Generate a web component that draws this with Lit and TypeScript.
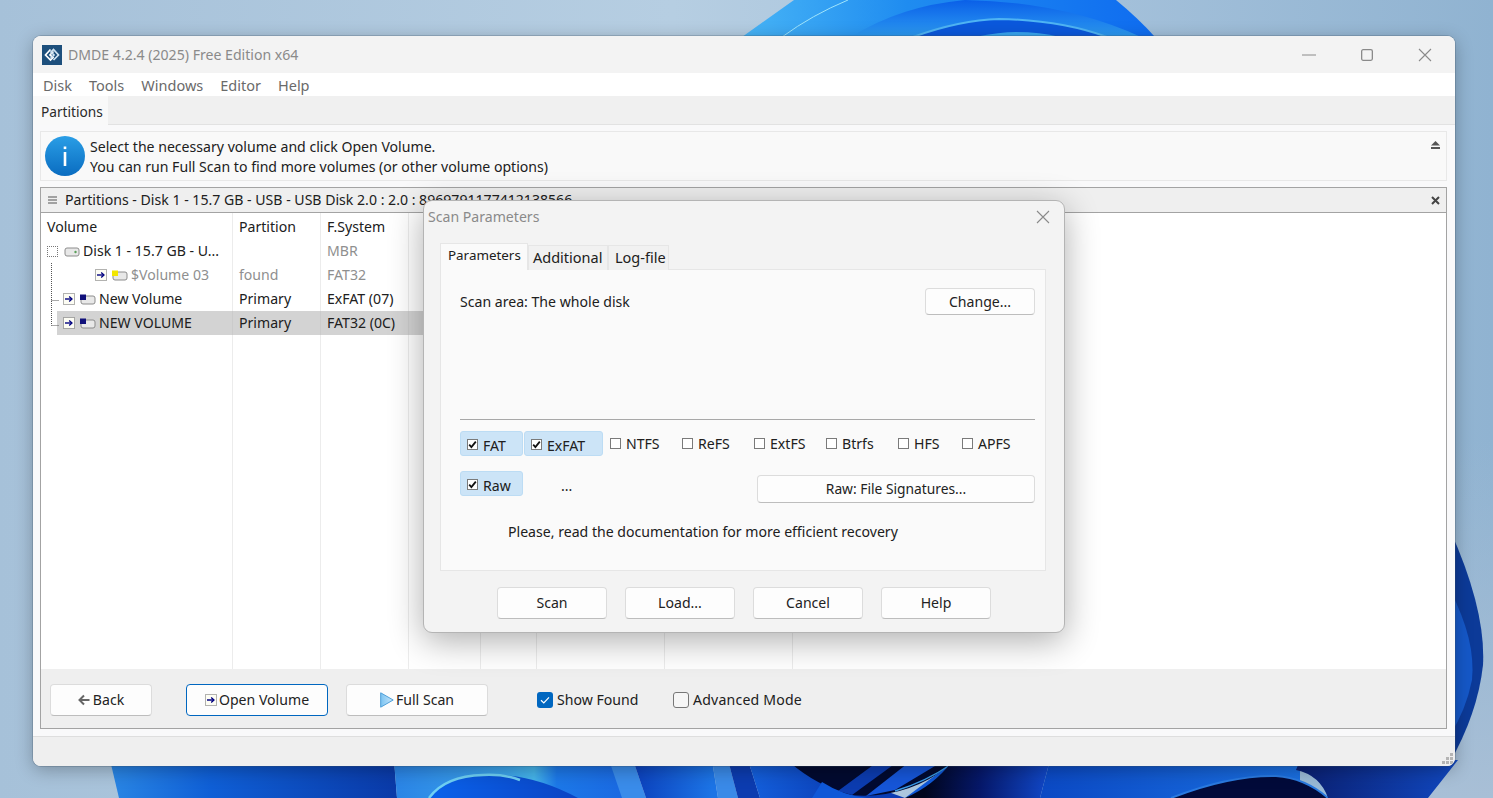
import { LitElement, html, css, svg } from "lit";
import { customElement } from "lit/decorators.js";

const check = svg`<path d="M2.2 5.6 L4.4 8 L8.8 2.6" fill="none" stroke="#111" stroke-width="1.8"/>`;

const smallBox = (on: boolean) => html`<svg class="cb" width="11" height="11" viewBox="0 0 11 11">
  <rect x=".5" y=".5" width="10" height="10" fill="#fff" stroke="#7a7a7a"/>${on ? check : ""}</svg>`;

const arrowBox = (cls = "abox") => html`<svg class=${cls} width="12" height="12" viewBox="0 0 12 12">
  <rect x=".5" y=".5" width="11" height="11" fill="#fdfdf4" stroke="#666" stroke-dasharray="1 1"/>
  <path d="M2 6 H8" stroke="#000080" stroke-width="1.4"/><path d="M6.2 3.4 L9 6 L6.2 8.6" fill="none" stroke="#000080" stroke-width="1.3"/></svg>`;

const driveIcon = (flag: string) => html`<svg class="drive" width="16" height="12" viewBox="0 0 16 12">
  <rect x="1" y="3" width="14" height="8" rx="2" fill="#e8e8e8" stroke="#8c8c8c"/>
  ${flag ? svg`<rect x="0" y="1.5" width="6" height="5.5" fill=${flag}/>` : svg`<circle cx="11.5" cy="7" r="1.2" fill="#5aa05a"/>`}
</svg>`;

const rows = [
  { indent: "l0", box: "dots", flag: "", name: "Disk 1 - 15.7 GB - U...", part: "", fs: "MBR", dim: false, fsDim: true },
  { indent: "l2", box: "arrow", flag: "#f2e600", name: "$Volume 03", part: "found", fs: "FAT32", dim: true, fsDim: true },
  { indent: "l1", box: "arrow", flag: "#10107a", name: "New Volume", part: "Primary", fs: "ExFAT (07)", dim: false, fsDim: false },
  { indent: "l1 sel", box: "arrow", flag: "#10107a", name: "NEW VOLUME", part: "Primary", fs: "FAT32 (0C)", dim: false, fsDim: false },
];

const fsItems = [
  { n: "NTFS", w: "" }, { n: "ReFS", w: "" }, { n: "ExtFS", w: "" },
  { n: "Btrfs", w: "" }, { n: "HFS", w: "short" }, { n: "APFS", w: "short" },
];

@customElement("app-root")
export class AppRoot extends LitElement {
  static styles = css`
    :host { display: block; position: relative; width: 1493px; height: 798px; overflow: hidden;
      font-family: "Noto Sans", "Open Sans", sans-serif; font-size: 14.1px; color: #202020; line-height: 20px; }
    .wall { position: absolute; inset: 0; display: block; }
    .win { position: absolute; left: 33px; top: 36px; width: 1422px; height: 730px; box-sizing: border-box;
      border-radius: 8px; overflow: hidden; background: #f9f9fa; display: flex; flex-direction: column;
      box-shadow: 0 0 0 1px rgba(60,80,100,.25), 0 4px 18px rgba(0,0,0,.28); }
    .title { height: 37px; flex: none; background: #f3f3f3; display: flex; align-items: center; padding-left: 9px; color: #8a8a8a; }
    .logo { margin-right: 6px; display: block; }
    .ctrls { margin-left: auto; display: flex; padding-right: 1px; }
    .ctrl { width: 58px; height: 24px; display: flex; align-items: center; justify-content: center; }
    .ctrl.mid { padding-right: 1px; box-sizing: border-box; }
    .menu { height: 23px; flex: none; box-sizing: border-box; background: #fff; display: flex; align-items: center; gap: 17px; padding-left: 10px; color: #6a6a6a; font-size: 14.5px; }
    .tabs { height: 29px; flex: none; box-sizing: border-box; background: #f0f0f0; border-bottom: 1px solid #e2e2e2; display: flex; }
    .tab { width: 75px; height: 29px; background: #f9f9f9; padding-left: 8px; box-sizing: border-box; line-height: 32px; color: #2a2a2a; font-size: 13.7px; }
    .body { flex: none; padding: 6px 8px 0 7px; display: flex; flex-direction: column; gap: 6px; }
    .info { height: 50px; box-sizing: border-box; background: #f9f9f9; border: 1px solid #e8e8e8; display: flex; align-items: center; padding-left: 4px; position: relative; }
    .info-i { margin-right: 5px; display: block; flex: none; }
    .info-t { padding-top: 2px; }
    .info-up { margin-left: auto; margin-right: 6px; align-self: flex-start; margin-top: 9px; display: block; }
    .panel { height: 542px; box-sizing: border-box; border: 1px solid #a3a3a3; display: flex; flex-direction: column; background: #fff; }
    .phead { height: 25px; flex: none; box-sizing: border-box; background: #efefef; border-bottom: 1px solid #a3a3a3; display: flex; align-items: center; padding-left: 7px; gap: 8px; white-space: nowrap; }
    .phead .x { margin-left: auto; margin-right: 6px; display: block; }
    .list { flex: 1; position: relative; display: grid; min-height: 0;
      grid-template-columns: 192px 88px 88px 72px 56px 128px 128px 1fr; grid-template-rows: 26px 24px 24px 24px 24px 1fr; }
    .cell { border-right: 1px solid #ececec; padding-left: 6px; line-height: 24px; white-space: nowrap; min-width: 0; }
    .head { line-height: 28px; }
    .cell:nth-child(8n) { border-right: none; }
    .dim { color: #8f8f8f; }
    .tree { display: flex; align-items: center; padding-left: 0; }
    .tree.l0 { padding-left: 6px; }
    .tree.l1 { padding-left: 22px; }
    .tree.l2 { padding-left: 54px; }
    .tree.sel { margin-left: 16px; padding-left: 6px; }
    .cell.rowsel { background: #d3d3d3; border-right-color: #cbcbcb; }
    .abox { margin-right: 5px; flex: none; }
    .drive { margin-right: 3px; flex: none; }
    .dots { width: 11px; height: 11px; box-sizing: border-box; border: 1px dotted #777; margin-right: 6px; flex: none; }
    .lines { position: absolute; left: 0; top: 0; pointer-events: none; }
    .bar { height: 59px; flex: none; box-sizing: border-box; padding-top: 3px; background: #efefef; display: flex; align-items: center; padding-left: 9px; }
    .btn { box-sizing: border-box; background: #fdfdfd; border: 1px solid #dcdcdc; border-bottom-color: #bdbdbd; border-radius: 4px;
      display: flex; align-items: center; justify-content: center; color: #222; flex: none; }
    .big { height: 32px; }
    .back { width: 102px; margin-right: 34px; gap: 3px; }
    .open { width: 142px; margin-right: 18px; border: 1px solid #0067c0; gap: 2px; }
    .full { width: 142px; margin-right: 49px; gap: 2px; }
    .chk { display: flex; align-items: center; gap: 4px; flex: none; }
    .chk svg { display: block; }
    .show { width: 136px; }
    .adv { letter-spacing: .2px; }
    .status { flex: 1; border-top: 1px solid #dedede; background: #efefef; margin-top: 7px; position: relative; }
    .grip { position: absolute; right: 1px; bottom: 1px; display: block; }

    .dlg { position: absolute; left: 423px; top: 200px; width: 642px; height: 433px; box-sizing: border-box; border: 1px solid #b4b4b4; padding: 1px;
      border-radius: 9px; background: #f3f3f3; box-shadow: 0 8px 34px rgba(0,0,0,.32); display: flex; flex-direction: column; }
    .dtitle { height: 30px; flex: none; display: flex; align-items: center; padding-left: 3px; color: #8a8a8a; padding-right: 13px; }
    .dtitle svg { margin-left: auto; display: block; }
    .dtabs { display: flex; align-items: flex-end; height: 27px; flex: none; margin: 11px 0 0 15px; position: relative; z-index: 1; }
    .dtab { box-sizing: border-box; height: 25px; line-height: 23px; padding-left: 4px; background: #f1f1f1; border: 1px solid #e6e6e6; border-bottom: none; font-size: 14.5px; }
    .dtab.on { height: 27px; width: 88px; padding-left: 7px; background: #fafafa; line-height: 23px; font-size: 13.4px; }
    .dtab.add { width: 80px; }
    .dtab.log { width: 61px; padding-left: 6px; }
    .dpanel { height: 302px; flex: none; box-sizing: border-box; margin: -1px 17px 0 15px; background: #fafafa; border: 1px solid #e6e6e6; padding: 18px 10px 0 19px; }
    .scan { display: flex; align-items: center; justify-content: space-between; }
    .chg { width: 110px; height: 27px; }
    .sep { height: 1px; background: #a8a8a8; margin-top: 104px; }
    .fsrow { display: flex; margin-top: 11px; align-items: flex-start; }
    .hl { box-sizing: border-box; height: 25px; padding-top: 2px; background: #cce4f7; border: 1px solid #bcdcf4; border-radius: 3px; display: flex; align-items: center; padding-left: 6px; gap: 5px; margin-right: 1px; }
    .hl .t { margin-top: 2px; }
    .hl.fat { width: 63px; }
    .hl.exfat { width: 79px; margin-right: 0; }
    .fs { width: 72px; box-sizing: border-box; padding-left: 7px; display: flex; align-items: center; gap: 5px; height: 25px; }
    .fs span { margin-top: 1px; }
    .fs.short { width: 64px; }
    .cb { display: block; flex: none; }
    .row2 { display: flex; margin-top: 15px; align-items: flex-start; }
    .dots3 { margin-left: 37px; line-height: 29px; }
    .rawbtn { width: 278px; height: 28px; margin-left: auto; margin-top: 4px; font-size: 13.8px; }
    .note { margin: 19px 0 0 48px; }
    .dbtns { display: flex; justify-content: center; gap: 18px; margin-top: 16px; }
    .dbtn { width: 110px; height: 32px; }
  `;

  render() {
    return html`
      <svg class="wall" width="1493" height="798" viewBox="0 0 1493 798">
        <defs>
          <linearGradient id="sky" x1="0" x2="1" y1="0" y2="0">
            <stop offset="0" stop-color="#a6c1d9"/><stop offset=".45" stop-color="#b6cee2"/><stop offset=".75" stop-color="#a3c0da"/><stop offset="1" stop-color="#90b3d1"/>
          </linearGradient>
          <linearGradient id="skyb" x1="0" x2="0" y1="0" y2="1">
            <stop offset="0" stop-color="#a8bfd6" stop-opacity="0"/><stop offset="1" stop-color="#a8bfd6"/>
          </linearGradient>
          <linearGradient id="t1" x1="0" x2="1" y1="0" y2="0">
            <stop offset="0" stop-color="#47b4f6"/><stop offset=".4" stop-color="#1f8cf0"/><stop offset="1" stop-color="#0f6cf0"/>
          </linearGradient>
          <linearGradient id="t2" x1="0" x2="0" y1="0" y2="1">
            <stop offset="0" stop-color="#0a5fe8"/><stop offset="1" stop-color="#2d9cf2"/>
          </linearGradient>
          <linearGradient id="b1" x1="0" x2="1" y1="0" y2="0">
            <stop offset="0" stop-color="#2a86e4"/><stop offset=".35" stop-color="#0f5fd6"/><stop offset="1" stop-color="#0a3aa8"/>
          </linearGradient>
          <linearGradient id="b2" x1="0" x2="1" y1="0" y2="0">
            <stop offset="0" stop-color="#0b49c4"/><stop offset="1" stop-color="#1a6fe0"/>
          </linearGradient>
          <linearGradient id="b3" x1="0" x2="1" y1="0" y2="0">
            <stop offset="0" stop-color="#0a1f70"/><stop offset="1" stop-color="#1148c0"/>
          </linearGradient>
          <linearGradient id="a1" gradientUnits="userSpaceOnUse" x1="394" x2="620" y1="0" y2="0">
            <stop offset="0" stop-color="#2a84e6"/><stop offset=".5" stop-color="#3ca4ea"/><stop offset=".62" stop-color="#45b4ea"/><stop offset=".72" stop-color="#1c78e8"/><stop offset="1" stop-color="#1a6ae2"/>
          </linearGradient>
          <linearGradient id="a2" gradientUnits="userSpaceOnUse" x1="440" x2="575" y1="0" y2="0">
            <stop offset="0" stop-color="#0a60e8"/><stop offset="1" stop-color="#0a44c4"/>
          </linearGradient>
          <linearGradient id="a3" gradientUnits="userSpaceOnUse" x1="633" x2="712" y1="0" y2="0">
            <stop offset="0" stop-color="#0b40bc"/><stop offset="1" stop-color="#1c74e6"/>
          </linearGradient>
          <linearGradient id="a4" gradientUnits="userSpaceOnUse" x1="748" x2="850" y1="0" y2="0">
            <stop offset="0" stop-color="#1460dc"/><stop offset="1" stop-color="#0a3cb4"/>
          </linearGradient>
          <linearGradient id="a5" gradientUnits="userSpaceOnUse" x1="925" x2="1048" y1="0" y2="0">
            <stop offset="0" stop-color="#01061e"/><stop offset=".45" stop-color="#06186a"/><stop offset="1" stop-color="#1148c8"/>
          </linearGradient>
        </defs>
        <rect width="1493" height="798" fill="url(#sky)"/>
        <rect x="1380" y="440" width="113" height="358" fill="url(#skyb)"/>
        <path d="M742 37 L794 0 H1116 Q1138 18 1155 37 Z" fill="url(#t1)"/>
        <path d="M782 37 Q812 15 848 0" stroke="#9fe4fb" stroke-width="1" fill="none"/>
        <path d="M851 37 Q900 6 965 0 Q1065 2 1141 37 Z" fill="url(#t2)"/>
        <path d="M913 37 Q960 20 999 19 Q1060 20 1107 37 Z" fill="#0b58dc"/>
        <path d="M913 37 Q960 20 999 19 Q1060 20 1107 37" stroke="#4fb4f4" stroke-width="2" fill="none"/>
        <path d="M975 37 Q1000 32 1016 32 Q1040 32 1060 37 Z" fill="#38a6f0"/>

        <path d="M1450 530 Q1486 610 1483 665 Q1476 730 1427 798 H1400 V530 Z" fill="#0c3a98"/>
        <path d="M1450 590 Q1476 640 1472 680 Q1466 710 1450 735 Z" fill="#1558c8"/>

        <path d="M110 760 H394 L397 798 H119 Z" fill="url(#b1)"/>
        <path d="M394 760 H633 L641 798 H397 Z" fill="url(#a1)"/>
        <path d="M429 798 Q445 776 483 775 Q530 772 578 798 Z" fill="url(#a2)"/>
        <path d="M429 798 Q445 776 483 775 Q505 774 520 780" stroke="#6fd0f4" stroke-width="2.5" fill="none"/>
        <path d="M609 760 H633 L646 798 H622 Z" fill="#3a8cea"/>
        <path d="M633 760 H712 L718 798 H646 Z" fill="url(#a3)"/>
        <path d="M712 760 H728 L738 798 H718 Z" fill="#3a8ae8"/>
        <path d="M728 760 H748 L760 798 H738 Z" fill="#0c3cb0"/>
        <path d="M748 760 H800 L905 798 H760 Z" fill="url(#a4)"/>
        <path d="M787 760 Q815 785 850 795 Q905 800 949 766 L955 760 Z" fill="#020a30"/>
        <path d="M838 791 L880 760 H900 L852 795 Z" fill="#0c3cb0"/>
        <path d="M866 796 L912 760 H945 L895 790 Z" fill="#1656d8"/>
        <path d="M822 782 Q850 800 880 798 H905 Q930 790 949 766 L953 762 L905 798 H812 Z" fill="#0f58d8"/>
        <path d="M895 791 Q925 782 950 765" stroke="#3a9ce8" stroke-width="1.5" fill="none"/>
        <path d="M953 760 H1050 L1040 798 H905 Q935 785 953 760 Z" fill="url(#a5)"/>
        <path d="M1050 760 H1300 V798 H1040 Z" fill="url(#b2)"/>
        <path d="M1171 798 Q1230 775 1276 776 Q1305 778 1328 798 Z" fill="#020a3a"/>
        <path d="M1171 798 Q1230 775 1276 776 Q1305 778 1328 798" stroke="#2a7ae0" stroke-width="2" fill="none"/>
        <path d="M1300 760 H1458 L1428 798 H1328 Q1320 775 1296 770 Z" fill="url(#b3)"/>
      </svg>

      <div class="win">
        <div class="title">
          <svg class="logo" width="20" height="20" viewBox="0 0 20 20">
            <rect width="20" height="20" fill="#1d4f7c"/>
            <path d="M8.5 4.5 L3.5 10 L8.5 15 L11 12.5 L8 10 L11.5 6.5" fill="none" stroke="#fff" stroke-width="1.7"/>
            <path d="M11.5 15 L16.5 10 L11.5 4.5 L9 7 L12 10 L8.5 13.5" fill="none" stroke="#cfe3f2" stroke-width="1.7"/>
          </svg>
          DMDE 4.2.4 (2025) Free Edition x64
          <div class="ctrls">
            <div class="ctrl"><svg width="14" height="2" viewBox="0 0 14 2"><path d="M0 1H14" stroke="#8a8a8a"/></svg></div>
            <div class="ctrl mid"><svg width="12" height="12" viewBox="0 0 12 12"><rect x=".65" y=".65" width="10.7" height="10.7" rx="1.5" fill="none" stroke="#8a8a8a" stroke-width="1.3"/></svg></div>
            <div class="ctrl"><svg width="14" height="14" viewBox="0 0 14 14"><path d="M1 1L13 13M13 1L1 13" stroke="#8a8a8a" stroke-width="1.1"/></svg></div>
          </div>
        </div>
        <div class="menu"><span>Disk</span><span>Tools</span><span>Windows</span><span>Editor</span><span>Help</span></div>
        <div class="tabs"><div class="tab">Partitions</div></div>
        <div class="body">
          <div class="info">
            <svg class="info-i" width="40" height="40" viewBox="0 0 40 40">
              <defs><linearGradient id="ig" x1="0" x2="0" y1="0" y2="1"><stop offset="0" stop-color="#2a9ee6"/><stop offset="1" stop-color="#0a6cc0"/></linearGradient></defs>
              <circle cx="20" cy="20" r="20" fill="url(#ig)"/>
              <rect x="18.7" y="16" width="2.6" height="14" fill="#fff"/><rect x="18.7" y="10.5" width="2.6" height="2.6" fill="#fff"/>
            </svg>
            <div class="info-t">Select the necessary volume and click Open Volume.<br>You can run Full Scan to find more volumes (or other volume options)</div>
            <svg class="info-up" width="9" height="8" viewBox="0 0 9 8"><path d="M4.5 0 L9 4.5 H0 Z" fill="#555"/><rect y="6" width="9" height="2" fill="#555"/></svg>
          </div>
          <div class="panel">
            <div class="phead">
              <svg width="9" height="8" viewBox="0 0 9 8"><path d="M0 1H9M0 4H9M0 7H9" stroke="#555" stroke-width="1.2"/></svg>
              <span>Partitions - Disk 1 - 15.7 GB - USB - USB Disk 2.0 : 2.0 : 8969791177412138566</span>
              <svg class="x" width="9" height="9" viewBox="0 0 9 9"><path d="M1 1L8 8M8 1L1 8" stroke="#444" stroke-width="2"/></svg>
            </div>
            <div class="list">
              <div class="cell head">Volume</div><div class="cell head">Partition</div><div class="cell head">F.System</div>
              <div class="cell"></div><div class="cell"></div><div class="cell"></div><div class="cell"></div><div class="cell"></div>
              ${rows.map((r) => {
                const sel = r.indent.includes("sel") ? "rowsel" : "";
                return html`
                  <div class="cell tree ${r.indent} ${sel} ${r.dim ? "dim" : ""}">
                    ${r.box === "dots" ? html`<span class="dots"></span>` : arrowBox()}
                    ${driveIcon(r.flag)}<span>${r.name}</span>
                  </div>
                  <div class="cell ${sel} ${r.dim ? "dim" : ""}">${r.part}</div>
                  <div class="cell ${sel} ${r.fsDim ? "dim" : ""}">${r.fs}</div>
                  <div class="cell ${sel}"></div><div class="cell ${sel}"></div><div class="cell ${sel}"></div><div class="cell ${sel}"></div><div class="cell"></div>`;
              })}
              <div class="cell"></div><div class="cell"></div><div class="cell"></div><div class="cell"></div><div class="cell"></div><div class="cell"></div><div class="cell"></div><div class="cell"></div>
              <svg class="lines" width="40" height="130" viewBox="0 0 40 130">
                <path d="M10.5 50V112.5M10.5 87.5H18M10.5 112.5H18" stroke="#555" stroke-dasharray="1 1" fill="none"/>
              </svg>
            </div>
            <div class="bar">
              <div class="btn big back"><svg width="12" height="12" viewBox="0 0 12 12"><path d="M11.5 6H2M6 1.5L1.5 6L6 10.5" fill="none" stroke="#666" stroke-width="2"/></svg>Back</div>
              <div class="btn big open">${arrowBox("")}Open Volume</div>
              <div class="btn big full"><svg width="14" height="16" viewBox="0 0 14 16"><defs><linearGradient id="tri" x1="0" x2="1"><stop offset="0" stop-color="#7cc4f2"/><stop offset="1" stop-color="#c8e6fa"/></linearGradient></defs><path d="M.7 .8 L13.2 8 L.7 15.2 Z" fill="url(#tri)" stroke="#4f9fd8"/></svg>Full Scan</div>
              <div class="chk show"><svg width="16" height="16" viewBox="0 0 16 16"><rect width="16" height="16" rx="3" fill="#0067c0"/><path d="M4 8.3 L6.8 11 L12 5.4" fill="none" stroke="#fff" stroke-width="1.2"/></svg>Show Found</div>
              <div class="chk adv"><svg width="16" height="16" viewBox="0 0 16 16"><rect x=".5" y=".5" width="15" height="15" rx="2.5" fill="#f6f6f6" stroke="#777"/></svg>Advanced Mode</div>
            </div>
          </div>
        </div>
        <div class="status">
          <svg class="grip" width="12" height="12" viewBox="0 0 12 12" fill="#b4b4b4"><rect x="8" y="0" width="3" height="3"/><rect x="4" y="4" width="3" height="3"/><rect x="8" y="4" width="3" height="3"/><rect x="0" y="8" width="3" height="3"/><rect x="4" y="8" width="3" height="3"/><rect x="8" y="8" width="3" height="3"/></svg>
        </div>
      </div>

      <div class="dlg">
        <div class="dtitle">Scan Parameters
          <svg width="14" height="14" viewBox="0 0 14 14"><path d="M1 1L13 13M13 1L1 13" stroke="#8a8a8a" stroke-width="1.1"/></svg>
        </div>
        <div class="dtabs">
          <div class="dtab on">Parameters</div><div class="dtab add">Additional</div><div class="dtab log">Log-file</div>
        </div>
        <div class="dpanel">
          <div class="scan"><span>Scan area: The whole disk</span><div class="btn chg">Change...</div></div>
          <div class="sep"></div>
          <div class="fsrow">
            <div class="hl fat">${smallBox(true)}<span class="t">FAT</span></div>
            <div class="hl exfat">${smallBox(true)}<span class="t">ExFAT</span></div>
            ${fsItems.map((f) => html`<div class="fs ${f.w}">${smallBox(false)}<span>${f.n}</span></div>`)}
          </div>
          <div class="row2">
            <div class="hl fat">${smallBox(true)}<span class="t">Raw</span></div>
            <span class="dots3">...</span>
            <div class="btn rawbtn">Raw: File Signatures...</div>
          </div>
          <div class="note">Please, read the documentation for more efficient recovery</div>
        </div>
        <div class="dbtns">
          <div class="btn dbtn">Scan</div><div class="btn dbtn">Load...</div><div class="btn dbtn">Cancel</div><div class="btn dbtn">Help</div>
        </div>
      </div>
    `;
  }
}
